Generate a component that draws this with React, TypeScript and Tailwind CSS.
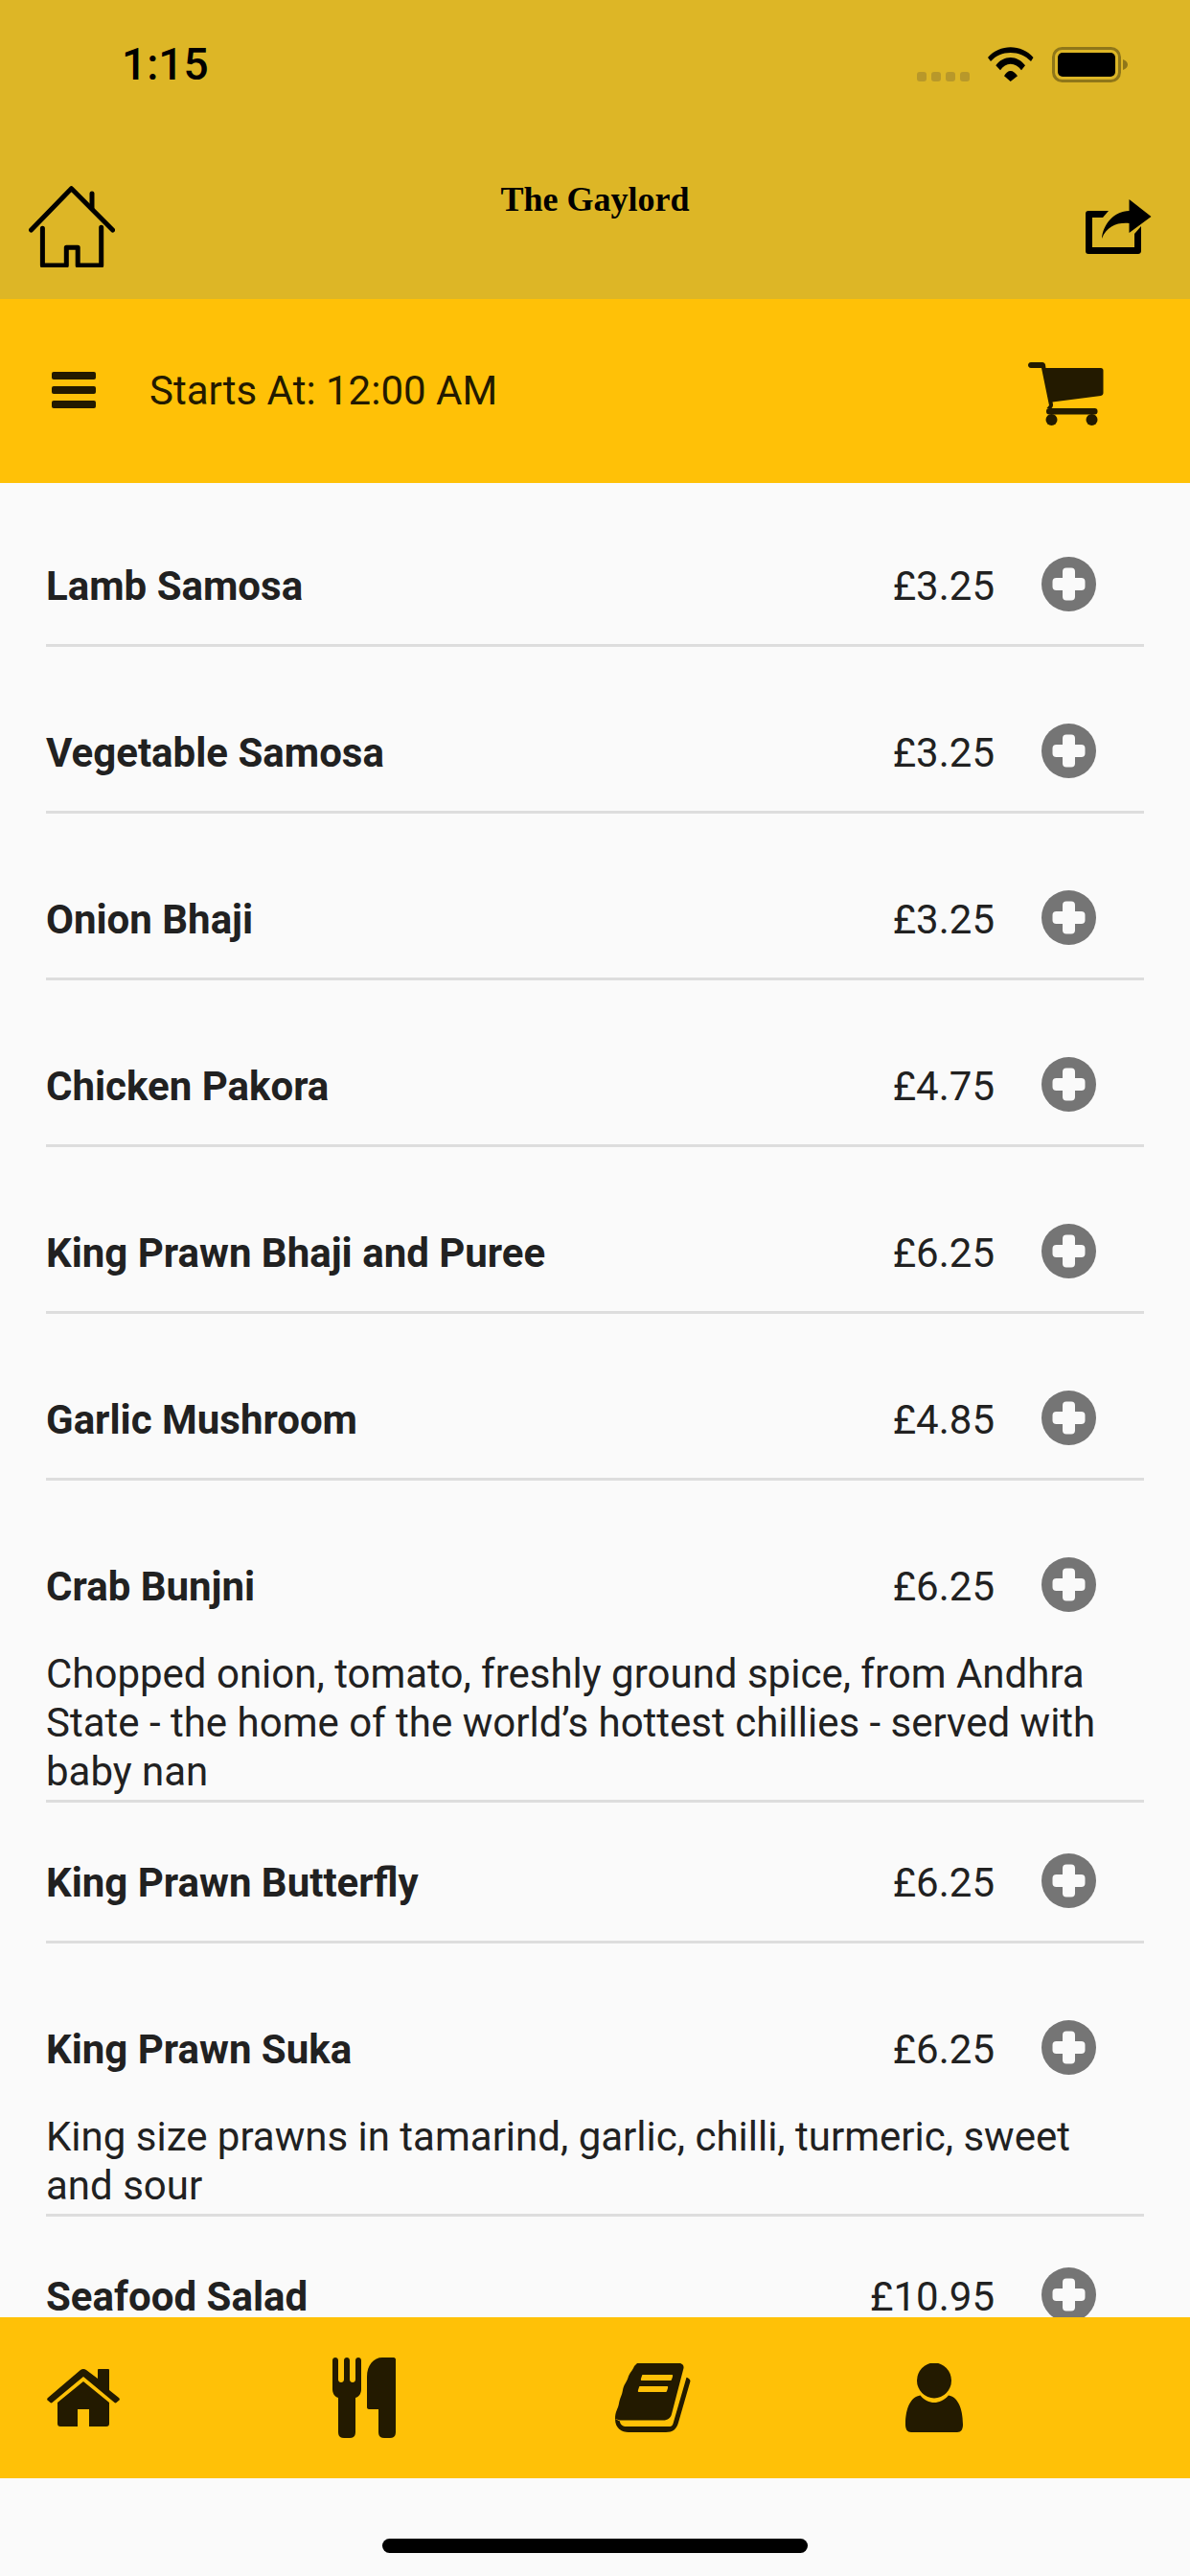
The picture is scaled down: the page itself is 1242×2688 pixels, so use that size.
const DARK = '#231a00';

interface MenuItem {
  name: string;
  price: string;
  description?: string;
  first?: boolean;
  afterDescription?: boolean;
}

const items: MenuItem[] = [
  { name: 'Lamb Samosa', price: '£3.25', first: true },
  { name: 'Vegetable Samosa', price: '£3.25' },
  { name: 'Onion Bhaji', price: '£3.25' },
  { name: 'Chicken Pakora', price: '£4.75' },
  { name: 'King Prawn Bhaji and Puree', price: '£6.25' },
  { name: 'Garlic Mushroom', price: '£4.85' },
  {
    name: 'Crab Bunjni',
    price: '£6.25',
    description: 'Chopped onion, tomato, freshly ground spice, from Andhra State - the home of the world’s hottest chillies - served with baby nan',
  },
  { name: 'King Prawn Butterfly', price: '£6.25', afterDescription: true },
  {
    name: 'King Prawn Suka',
    price: '£6.25',
    description: 'King size prawns in tamarind, garlic, chilli, turmeric, sweet and sour',
  },
  { name: 'Seafood Salad', price: '£10.95', afterDescription: true },
];

function PlusButton() {
  return (
    <svg width="57" height="57" viewBox="0 0 57 57" className="shrink-0">
      <circle cx="28.5" cy="28.5" r="28.5" fill="#757575" />
      <rect x="11.5" y="22" width="34" height="13" rx="4" fill="#fafafa" />
      <rect x="22" y="11.5" width="13" height="34" rx="4" fill="#fafafa" />
    </svg>
  );
}

function MenuRow({ item }: { item: MenuItem }) {
  let top = 'pt-[82px]';
  if (item.first) top = 'pt-[79px]';
  if (item.afterDescription) top = 'pt-[55px]';

  return (
    <div className={`mx-[48px] border-b-[3px] border-[#dddddd] ${top}`}>
      <div className="flex h-[57px] items-center">
        <span className="flex-1 text-[42px] font-bold">{item.name}</span>
        <span className="ml-[2px] text-[42px]">{item.price}</span>
        <span className="mb-[4px] ml-[49px] mr-[50px] flex">
          <PlusButton />
        </span>
      </div>
      {item.description ? (
        <p className="mt-[37px] pb-[4px] text-[42px] leading-[51px]">{item.description}</p>
      ) : (
        <div className="h-[32px]" />
      )}
    </div>
  );
}

function StatusBar() {
  return (
    <div className="flex h-[190px] items-start justify-between">
      <span className="ml-[127px] mt-[40px] text-[46px] leading-[55px] font-medium text-black">1:15</span>
      <div className="mr-[65px] mt-[49px] flex items-end">
        <div className="mb-[1px] flex gap-[5px]">
          <div className="h-[10px] w-[10px] rounded-[3px] bg-[#b8982a]" />
          <div className="h-[10px] w-[10px] rounded-[3px] bg-[#b8982a]" />
          <div className="h-[10px] w-[10px] rounded-[3px] bg-[#b8982a]" />
          <div className="h-[10px] w-[10px] rounded-[3px] bg-[#b8982a]" />
        </div>
        <svg width="48" height="37" viewBox="0 0 48 37" className="ml-[19px]">
          <path d="M0 11C6 4 15 0.3 23.7 0.3S41.500 4 47.500 11L45 15C39 9 32 6 23.700 6S8.500 9 3 15Z" fill="#000" />
          <path d="M8.300 19.300C12 14 18 11 23.700 11S35 14 39 19.300L35 24.300C32 20 28 17.700 23.700 17.700S16 20 13 24.300Z" fill="#000" />
          <path d="M17 30.300C19 27 21 25 23.700 25S28.500 27 31 30.300L23.700 36Z" fill="#000" />
        </svg>
        <svg width="79" height="37" viewBox="0 0 79 37" className="ml-[19px]">
          <rect x="1.500" y="1.500" width="69" height="34" rx="9" fill="none" stroke="#8f7619" strokeWidth="3" />
          <rect x="6" y="6" width="60" height="25" rx="5" fill="#000" />
          <path d="M74 13C77 14 79 16 79 18.500S77 23 74 24Z" fill="#8f7619" />
        </svg>
      </div>
    </div>
  );
}

function NavBar() {
  return (
    <div className="grid grid-cols-[1fr_auto_1fr] items-start px-[30px]">
      <svg width="90" height="85" viewBox="0 0 90 85" className="mt-[4px]" fill="none" stroke="#000" strokeWidth="5" strokeLinecap="round" strokeLinejoin="round">
        <path d="M2.500 46L44.500 2.700L87.600 46" />
        <path d="M66 8V23" />
        <path d="M14.400 44.300V83H39.300V64.300H51.200V83H75.700V43.300" />
      </svg>
      <span className="mt-[-9px] font-[family-name:'Liberation_Serif',serif] text-[36px] font-bold text-black">The Gaylord</span>
      <svg width="69" height="57" viewBox="0 0 69 57" className="mr-[10px] mt-[18px] justify-self-end" fill="#000">
        <path d="M45.500 0L68.500 18L45.500 35V25C33 24 22 28 17 41C18 26 30 12 45.500 12Z" />
        <path d="M3 12H24L18 19H7V50H51V36L58 28V54C58 56 56.500 57 55 57H3C1 57 0 56 0 54V15C0 13 1 12 3 12Z" />
      </svg>
    </div>
  );
}

function SubHeader() {
  return (
    <div className="flex h-[192px] items-center bg-[#ffc107] pl-[54px] pr-[90px]">
      <div className="mb-[3px] flex w-[46px] flex-col gap-[7px]">
        <div className="h-[8px] rounded-[2px] bg-[#231a00]" />
        <div className="h-[8px] rounded-[2px] bg-[#231a00]" />
        <div className="h-[8px] rounded-[2px] bg-[#231a00]" />
      </div>
      <span className="mb-[2px] ml-[56px] flex-1 text-[42px] text-[#231a00]">Starts At: 12:00 AM</span>
      <svg width="79" height="66" viewBox="0 0 79 66" className="mt-[6px]" fill={DARK}>
        <path d="M3 0H15C16.500 0 17.500 1 18 2.500L18.500 6H76C77.500 6 78.500 7 78.500 8.500V32C78.500 33.500 77.500 34.700 76 35L25.500 41.500L26 44C26.200 45.500 25.500 47 24.500 48H19.500L22 45L14 6H3C1 6 0 4.500 0 3S1 0 3 0Z" />
        <rect x="19" y="48" width="53.500" height="6.500" rx="3" />
        <ellipse cx="24.500" cy="60" rx="6" ry="6" />
        <ellipse cx="66.500" cy="60" rx="6" ry="6" />
      </svg>
    </div>
  );
}

function TabBar() {
  return (
    <div className="flex h-[168px] shrink-0 items-start bg-[#ffc107] pl-[49px]">
      <svg width="76" height="60" viewBox="0 0 76 60" className="mt-[54px]" fill={DARK}>
        <path d="M35 1C37 -0.300 39 -0.300 41 1L53 10V1C53 0.500 53.500 0 54 0H64C64.500 0 65 0.500 65 1V22L75 30C76 31 76 32 75.500 32.500L72.500 35C72 35.500 71 35.500 70.500 35L38 8L5.500 35C5 35.500 4 35.500 3.500 35L0.500 32.500C0 32 0 31 1 30Z" />
        <path d="M38 13L65 35V57C65 59 64 60 62 60H44V42H32V60H14C12 60 11 59 11 57V35Z" />
      </svg>
      <svg width="66" height="84" viewBox="0 0 66 84" className="ml-[222px] mt-[42px]" fill={DARK}>
        <path d="M0 3C0 1 1.500 0 3 0S6 1 6 3V23C6 25 7.500 26 9 26S12 25 12 23V3C12 1 13.500 0 15 0S18 1 18 3V23C18 25 19.500 26 21 26S24 25 24 23V3C24 1 25.500 0 27 0S30 1 30 3V33C30 37 28 41 24 42V78C24 82 22 84 18 84H12C8 84 6 82 6 78V42C2 41 0 37 0 33Z" />
        <path d="M36 20C36 8 43 0 52 0H64C65 0 66 1 66 2V78C66 82 64 84 60 84H54C50 84 48 82 48 78V54H38C37 54 36 53 36 52Z" />
      </svg>
      <svg width="79" height="72" viewBox="0 0 79 72" className="ml-[229px] mt-[48px]" fill={DARK}>
        <path d="M0 58C0 68 7 72 14 72H53C60 72 64 69 66 62L78.400 19C79 17 76 15 74.500 14.700L60.500 63C60 65.500 58 66 56 66H12C8 66 5 64 5 60.500Z" />
        <path d="M23 0H67C70 0 72 2.500 71.500 5L59 53C58 57 55 59.500 50 59.500H5L0 58C0 50 3 48 4 42C5 36 7 34 8 28C9 22 12 20 13.500 15C15 10 18 8 20 3Z" />
        <path d="M29 12H59C60 12 60.500 12.500 60 14L59 17C58.700 18 58 18 57 18H28C27 18 26.500 17.500 27 16L28 13C28 12.500 28.500 12 29 12Z" fill="#ffc107" />
        <path d="M26 24H54C55 24 55.500 24.500 55 26L54 29C53.700 30 53 30 52 30H25C24 30 23.500 29.500 24 28L25 25C25 24.500 25.500 24 26 24Z" fill="#ffc107" />
      </svg>
      <svg width="60" height="72" viewBox="0 0 60 72" className="ml-[224px] mt-[48px]" fill={DARK}>
        <ellipse cx="30" cy="18" rx="18" ry="18.500" />
        <path d="M15.500 33.500C20 39 25 41 30 41C35 41 40 39 45 33.500C54 35 60 46 60 64C60 69 58 72 54 72H6C2 72 0 69 0 64C0 46 6 35 15.500 33.500Z" />
      </svg>
    </div>
  );
}

export default function App() {
  return (
    <div className="flex h-[2688px] w-[1242px] flex-col overflow-hidden bg-[#fafafa] font-[family-name:Roboto,sans-serif] text-[#212121]">
      <div className="h-[312px] shrink-0 bg-[#ddb626]">
        <StatusBar />
        <NavBar />
      </div>
      <SubHeader />
      <div className="min-h-0 flex-1 overflow-hidden">
        {items.map((item) => (
          <MenuRow key={item.name} item={item} />
        ))}
      </div>
      <TabBar />
      <div className="flex h-[102px] shrink-0 justify-center pt-[63px]">
        <div className="h-[15px] w-[444px] rounded-full bg-black" />
      </div>
    </div>
  );
}
